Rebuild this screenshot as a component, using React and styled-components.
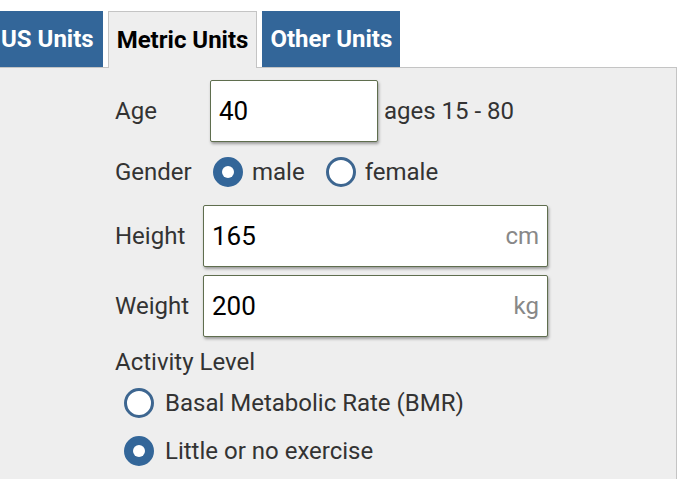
import React, { useState } from 'react';
import styled, { createGlobalStyle } from 'styled-components';

const Global = createGlobalStyle`
  html, body {
    margin: 0;
    padding: 0;
    background: #fff;
    font-family: Roboto, "Liberation Sans", Arial, sans-serif;
    overflow: hidden;
  }
`;

// PAGE
const Page = styled.div`
  margin-left: -8px;
  padding-top: 11px;
  width: 685px;
`;

// TABS
const TabBar = styled.div`
  display: flex;
  gap: 5px;
  height: 56px;
`;
const Tab = styled.button`
  font-family: inherit;
  font-size: 24px;
  font-weight: 700;
  height: 56px;
  padding: 0 ${p => p.$pad}px;
  border: ${p => (p.$active ? '1px solid #c4c4c4' : 'none')};
  border-bottom: none;
  background: ${p => (p.$active ? '#eeeeee' : '#336699')};
  color: ${p => (p.$active ? '#000' : '#fff')};
  cursor: pointer;
  position: relative;
  z-index: 1;
  white-space: nowrap;
  ${p => p.$active && 'height: 57px;'}
`;

// PANEL
const Panel = styled.div`
  background: #eeeeee;
  border: 1px solid #c4c4c4;
  border-left: none;
  height: 420px;
  padding: 12px 0 0 123px;
  box-sizing: border-box;
  color: #333;
  font-size: 24px;
`;
const Row = styled.div`
  display: flex;
  align-items: center;
  height: ${p => p.$h || 62}px;
  margin-bottom: ${p => p.$mb || 0}px;
`;
const Label = styled.div`
  width: ${p => p.$w}px;
  flex: none;
`;
const InputBox = styled.div`
  width: ${p => p.$w}px;
  height: 62px;
  box-sizing: border-box;
  background: #fff;
  border: 1px solid #5f6e4e;
  border-radius: 2px;
  box-shadow: 1px 2px 3px rgba(0, 0, 0, 0.35);
  display: flex;
  align-items: center;
  padding: 0 8px 0 8px;
`;
const Field = styled.input`
  border: none;
  outline: none;
  background: transparent;
  font-family: inherit;
  font-size: 26px;
  color: #000;
  flex: 1;
  min-width: 0;
  padding: 0;
`;
const Unit = styled.span`
  color: #888;
  font-size: 24px;
`;
const Hint = styled.span`
  margin-left: 6px;
`;
const RadioLabel = styled.label`
  display: flex;
  align-items: center;
  gap: ${p => p.$gap || 9}px;
  margin-right: ${p => p.$mr || 0}px;
  cursor: pointer;
`;
const RadioDot = styled.span`
  width: 30px;
  height: 30px;
  box-sizing: border-box;
  border-radius: 50%;
  flex: none;
  background: ${p => (p.$on ? '#336699' : '#fff')};
  border: 3px solid ${p => (p.$on ? '#336699' : '#3d6690')};
  display: flex;
  align-items: center;
  justify-content: center;
  &::after {
    content: '';
    width: 12px;
    height: 12px;
    border-radius: 50%;
    background: #fff;
    display: ${p => (p.$on ? 'block' : 'none')};
  }
`;
const SectionTitle = styled.div`
  height: 28px;
  line-height: 28px;
  margin: 11px 0 12px;
`;
const Options = styled.div`
  display: flex;
  flex-direction: column;
  gap: 18px;
  padding-left: 9px;
`;

const Radio = ({ on, children, mr, gap, onClick }) => (
  <RadioLabel $mr={mr} $gap={gap} onClick={onClick}>
    <RadioDot $on={on} />
    {children}
  </RadioLabel>
);

export default function App() {
  const [tab, setTab] = useState('metric');
  const [gender, setGender] = useState('male');
  const [activity, setActivity] = useState('little');
  const [age, setAge] = useState('40');
  const [height, setHeight] = useState('165');
  const [weight, setWeight] = useState('200');

  return (
    <>
      <Global />
      <Page>
        <TabBar>
          <Tab $pad={9} $active={tab === 'us'} onClick={() => setTab('us')}>US Units</Tab>
          <Tab $pad={8} $active={tab === 'metric'} onClick={() => setTab('metric')}>Metric Units</Tab>
          <Tab $pad={8} $active={tab === 'other'} onClick={() => setTab('other')}>Other Units</Tab>
        </TabBar>
        <Panel>
          <Row $mb={8}>
            <Label $w={95}>Age</Label>
            <InputBox $w={168}>
              <Field value={age} onChange={e => setAge(e.target.value)} />
            </InputBox>
            <Hint>ages 15 - 80</Hint>
          </Row>
          <Row $h={44} $mb={11}>
            <Label $w={98}>Gender</Label>
            <Radio mr={21} on={gender === 'male'} onClick={() => setGender('male')}>male</Radio>
            <Radio on={gender === 'female'} onClick={() => setGender('female')}>female</Radio>
          </Row>
          <Row $mb={8}>
            <Label $w={88}>Height</Label>
            <InputBox $w={345}>
              <Field value={height} onChange={e => setHeight(e.target.value)} />
              <Unit>cm</Unit>
            </InputBox>
          </Row>
          <Row>
            <Label $w={88}>Weight</Label>
            <InputBox $w={345}>
              <Field value={weight} onChange={e => setWeight(e.target.value)} />
              <Unit>kg</Unit>
            </InputBox>
          </Row>
          <SectionTitle>Activity Level</SectionTitle>
          <Options>
            <Radio gap={11} on={activity === 'bmr'} onClick={() => setActivity('bmr')}>Basal Metabolic Rate (BMR)</Radio>
            <Radio gap={11} on={activity === 'little'} onClick={() => setActivity('little')}>Little or no exercise</Radio>
          </Options>
        </Panel>
      </Page>
    </>
  );
}
